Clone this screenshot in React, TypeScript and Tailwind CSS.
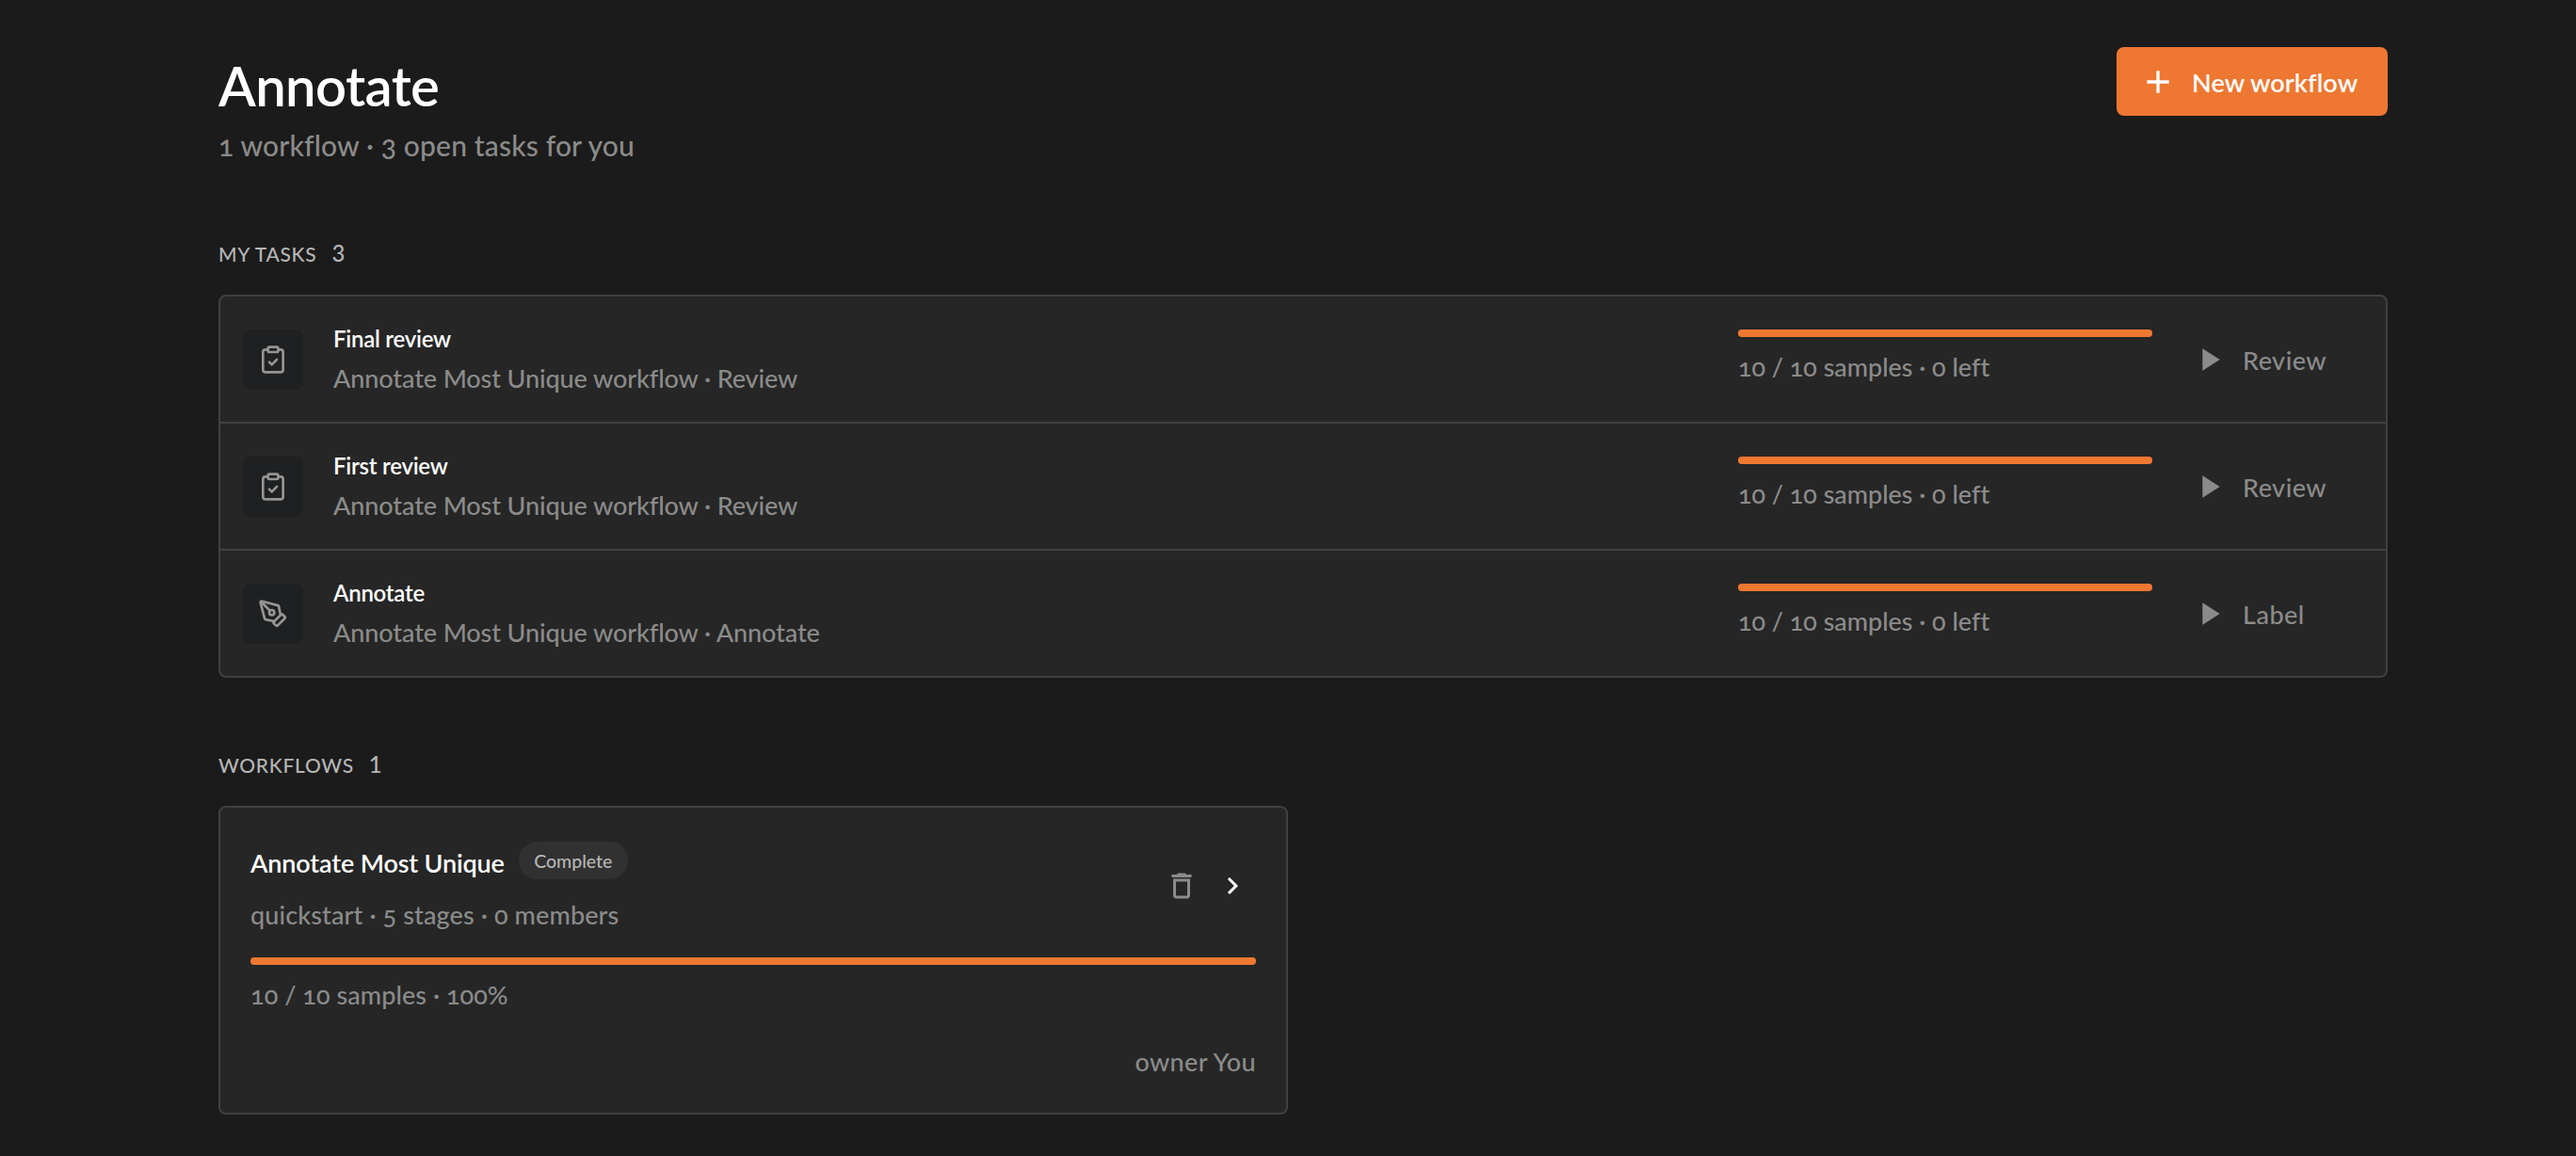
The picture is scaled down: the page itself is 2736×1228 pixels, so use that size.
import type { ReactNode } from "react";
import { ClipboardCheck, PenTool } from "lucide-react";
import { MdAdd, MdChevronRight, MdDeleteOutline, MdPlayArrow } from "react-icons/md";

const tasks = [
  {
    icon: <ClipboardCheck className="w-8 h-8" />,
    title: "Final review",
    description: "Annotate Most Unique workflow · Review",
    progress: 100,
    samples: "10 / 10 samples · 0 left",
    action: "Review",
  },
  {
    icon: <ClipboardCheck className="w-8 h-8" />,
    title: "First review",
    description: "Annotate Most Unique workflow · Review",
    progress: 100,
    samples: "10 / 10 samples · 0 left",
    action: "Review",
  },
  {
    icon: <PenTool className="w-8 h-8" />,
    title: "Annotate",
    description: "Annotate Most Unique workflow · Annotate",
    progress: 100,
    samples: "10 / 10 samples · 0 left",
    action: "Label",
  },
];

function SectionHeading({ count, children }: { count: number; children: ReactNode }) {
  return (
    <h2 className="flex h-8 items-baseline gap-4 leading-[33px] text-[#b5b5b5]">
      <span className="text-[21px] tracking-[0.7px] uppercase">{children}</span>
      <span className="text-[24px] lining-nums">{count}</span>
    </h2>
  );
}

function ProgressBar({ value }: { value: number }) {
  return (
    <div className="h-2 w-full rounded-full bg-[#3a3a3a]">
      <div className="h-2 rounded-full bg-[#ee7731]" style={{ width: `${value}%` }} />
    </div>
  );
}

function TaskList() {
  return (
    <div className="mt-[29px] rounded-lg border-2 border-[#404040] bg-[#262626]">
      {tasks.map((task) => (
        <div
          key={task.title}
          className="flex h-[135px] items-center border-b-2 border-[#404040] px-6 last:h-[133px] last:border-b-0"
        >
          <div className="flex h-16 w-16 items-center justify-center rounded-lg bg-[#1e2021] text-[#959595]">
            {task.icon}
          </div>
          <div className="ml-8 flex-1">
            <h3 className="pt-px text-[24px] leading-[30px] font-semibold tracking-[-0.25px] text-white">{task.title}</h3>
            <p className="mt-[9px] text-[27px] leading-9 tracking-[-0.1px]">{task.description}</p>
          </div>
          <div className="w-[440px] pb-[5px]">
            <ProgressBar value={task.progress} />
            <p className="mt-3.5 text-[27px] leading-9 tracking-[-0.05px]">{task.samples}</p>
          </div>
          <button className="ml-10 flex w-[184px] items-center gap-4 text-[27px] leading-9 font-medium tracking-[0.5px]">
            <MdPlayArrow className="h-10 w-10" />
            <span className="pt-0.5">{task.action}</span>
          </button>
        </div>
      ))}
    </div>
  );
}

function WorkflowCard() {
  return (
    <div className="h-[328px] rounded-lg border-2 border-[#404040] bg-[#262626] px-8 pt-9 text-[27px] leading-9">
      <div className="flex items-center">
        <div className="flex-1">
          <div className="flex h-10 gap-[15px]">
            <h3 className="mt-[5px] font-semibold tracking-[-0.15px] text-white">Annotate Most Unique</h3>
            <span className="flex h-10 w-[116px] items-center justify-center rounded-full bg-[#313131] pt-0.5 text-[19.5px] text-[#b5b5b5]">
              Complete
            </span>
          </div>
          <p className="mt-5 tracking-[0.12px]">quickstart · 5 stages · 0 members</p>
        </div>
        <div className="flex items-center gap-[18px] pr-[7px] pb-0.5">
          <MdDeleteOutline className="h-9 w-9" />
          <MdChevronRight className="h-9 w-9 text-white" />
        </div>
      </div>
      <div className="mt-[27px]">
        <ProgressBar value={100} />
      </div>
      <p className="mt-3.5 tracking-[0.05px]">10 / 10 samples · 100%</p>
      <p className="mt-[35px] text-right tracking-[0.35px]">owner You</p>
    </div>
  );
}

export default function App() {
  return (
    <div className="min-h-screen bg-[#1b1b1b] font-[Lato,sans-serif] font-medium text-[#8b8b8a] oldstyle-nums">
      <main className="ml-[232px] w-[2304px] pt-[50px]">
        <header className="flex items-start justify-between">
          <div>
            <h1 className="pt-0.5 text-[58px] leading-[78px] font-semibold tracking-[-0.6px] text-white">Annotate</h1>
            <p className="mt-1 text-[30px] leading-10 tracking-[0.15px]">1 workflow · 3 open tasks for you</p>
          </div>
          <button className="flex h-[73px] w-[288px] items-center gap-4 rounded-lg bg-[#ee7731] pl-6 text-[27px] leading-9 font-semibold tracking-[0.1px] text-white">
            <MdAdd className="h-10 w-10" />
            <span className="pt-0.5">New workflow</span>
          </button>
        </header>

        <section className="mt-[78px]">
          <SectionHeading count={3}>My tasks</SectionHeading>
          <TaskList />
        </section>

        <section className="mt-[75px]">
          <SectionHeading count={1}>Workflows</SectionHeading>
          <div className="mt-[29px] grid grid-cols-2 gap-8">
            <WorkflowCard />
          </div>
        </section>
      </main>
    </div>
  );
}
